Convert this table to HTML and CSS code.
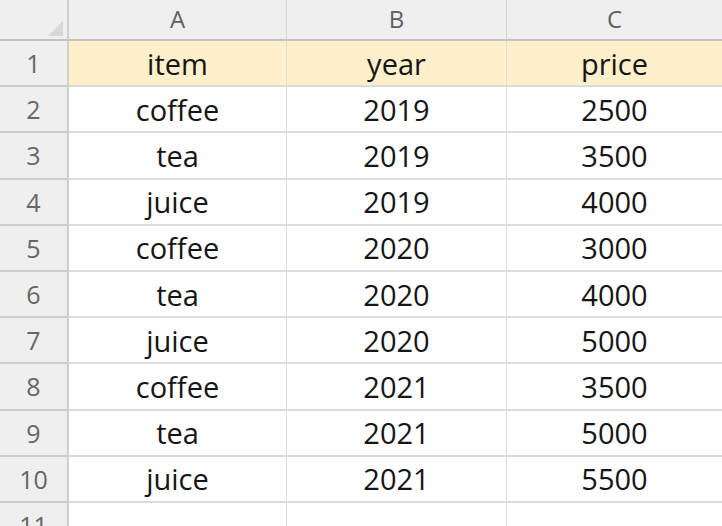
FILE: index.html
```html
<!DOCTYPE html>
<html>
<head>
<meta charset="utf-8">
<link rel="stylesheet" href="styles.css">
</head>
<body>
<div class="sheet">
  <div class="corner"><span class="tri"></span></div>
  <div class="colhead">A</div>
  <div class="colhead">B</div>
  <div class="colhead last">C</div>

  <div class="rowhead">1</div>
  <div class="cell hl">item</div><div class="cell hl">year</div><div class="cell hl last">price</div>

  <div class="rowhead">2</div>
  <div class="cell">coffee</div><div class="cell">2019</div><div class="cell last">2500</div>
  <div class="rowhead">3</div>
  <div class="cell">tea</div><div class="cell">2019</div><div class="cell last">3500</div>
  <div class="rowhead">4</div>
  <div class="cell">juice</div><div class="cell">2019</div><div class="cell last">4000</div>
  <div class="rowhead">5</div>
  <div class="cell">coffee</div><div class="cell">2020</div><div class="cell last">3000</div>
  <div class="rowhead">6</div>
  <div class="cell">tea</div><div class="cell">2020</div><div class="cell last">4000</div>
  <div class="rowhead">7</div>
  <div class="cell">juice</div><div class="cell">2020</div><div class="cell last">5000</div>
  <div class="rowhead">8</div>
  <div class="cell">coffee</div><div class="cell">2021</div><div class="cell last">3500</div>
  <div class="rowhead">9</div>
  <div class="cell">tea</div><div class="cell">2021</div><div class="cell last">5000</div>
  <div class="rowhead">10</div>
  <div class="cell">juice</div><div class="cell">2021</div><div class="cell last">5500</div>
  <div class="rowhead">11</div>
  <div class="cell"></div><div class="cell"></div><div class="cell last"></div>
</div>
</body>
</html>
```
FILE: styles.css
```css
html, body {
  margin: 0;
  padding: 0;
  background: #ffffff;
  overflow: hidden;
}
.sheet {
  display: grid;
  grid-template-columns: 69px 218px 220px 215px;
  grid-template-rows: 41px repeat(11, 46.2px);
  font-family: "Open Sans", "Noto Sans", sans-serif;
  width: 722px;
}
.corner {
  position: relative;
  background: #efefef;
  border-right: 2px solid #cfcfcf;
  border-bottom: 2px solid #c4c4c4;
  box-sizing: border-box;
}
.tri {
  position: absolute;
  right: 4px;
  bottom: 3px;
  width: 0;
  height: 0;
  border-left: 15px solid transparent;
  border-bottom: 15px solid #d8d8d8;
}
.colhead {
  background: #efefef;
  color: #5f5f5f;
  font-size: 24px;
  display: flex;
  align-items: center;
  justify-content: center;
  border-right: 1px solid #d6d6d6;
  border-bottom: 2px solid #c4c4c4;
  box-sizing: border-box;
  padding-bottom: 2px;
}
.colhead.last, .cell.last {
  border-right: none;
}
.rowhead {
  background: #efefef;
  color: #666666;
  font-size: 25px;
  display: flex;
  align-items: center;
  justify-content: center;
  border-right: 2px solid #cfcfcf;
  border-bottom: 2px solid #cdcdcd;
  box-sizing: border-box;
}
.cell {
  color: #151515;
  font-size: 29px;
  display: flex;
  align-items: center;
  justify-content: center;
  border-right: 1px solid #dcdcdc;
  border-bottom: 2px solid #dcdcdc;
  box-sizing: border-box;
}
.cell.hl {
  background: #fff0cb;
}
```
